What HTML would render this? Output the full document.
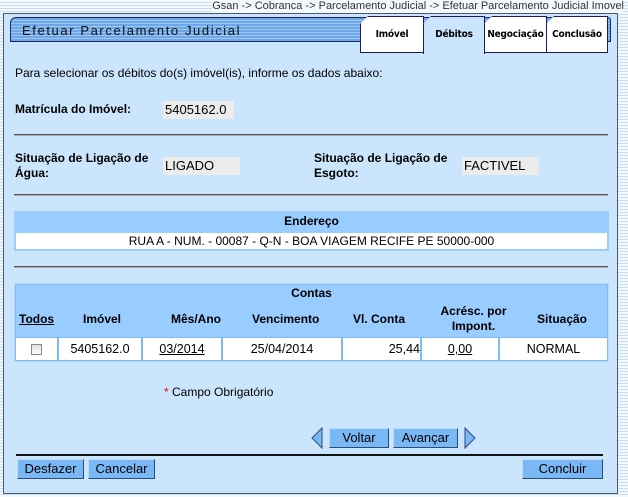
<!DOCTYPE html>
<html><head><meta charset="utf-8"><style>
*{margin:0;padding:0;box-sizing:border-box}
body{width:628px;height:497px;overflow:hidden;position:relative;font-family:"Liberation Sans",Arial,sans-serif;font-size:12px;color:#000;
background:repeating-linear-gradient(#f4f9ff 0,#f4f9ff 2px,#c6def6 2px,#c6def6 3px);}
.a{position:absolute}
.panel{left:3px;top:13px;width:615px;height:481px;background:#cbe5fc;border:1px solid #4a5a70}
.crumb{right:4px;top:0;font-size:11px;color:#333;background:#f4f9ff}
.title{left:10px;top:17px;width:601px;height:25px;border:1px solid #1a2a5a;border-radius:6px 3px 0 0;
background:repeating-linear-gradient(#6fa7e6 0,#6fa7e6 2px,#9cc7f2 2px,#9cc7f2 3px);}
.title span{position:absolute;left:11px;top:5px;font-size:13px;letter-spacing:1.6px;color:#111}
.tab{top:16px;height:37px;background:#fff;border:1px solid #1a1a5a;font-weight:bold;font-size:10px;text-align:center;line-height:36px;font-family:"DejaVu Sans Condensed","Liberation Sans Narrow",sans-serif;clip-path:polygon(8px 0,100% 0,100% 100%,0 100%,0 8px);letter-spacing:-0.2px}
.b{font-weight:bold}
.box{background:#ececec;height:18px;line-height:18px;padding-left:2px;font-size:13px}
.hr{left:14px;width:594px;height:2px;background:#555;border-bottom:1px solid #aaa}
.btn{height:20px;background:#7ab8f5;border:1px solid #2a4a7a;border-top-color:#c0dcff;border-left-color:#c0dcff;text-align:center;line-height:18px;font-size:13px}
</style></head><body>
<div class="a crumb">Gsan -&gt; Cobranca -&gt; Parcelamento Judicial -&gt; Efetuar Parcelamento Judicial Imovel</div>
<div class="a panel"></div>
<div class="a title"><span>Efetuar Parcelamento Judicial</span></div>
<div class="a tab" style="left:360px;width:64px">Imóvel</div>
<div class="a tab" style="left:423px;width:62px;background:#cbe5fc;border-bottom:none;height:38px">Débitos</div>
<div class="a tab" style="left:484px;width:63px">Negociação</div>
<div class="a tab" style="left:546px;width:62px">Conclusão</div>

<div class="a" style="left:15px;top:66px">Para selecionar os débitos do(s) imóvel(is), informe os dados abaixo:</div>
<div class="a b" style="left:15px;top:102px">Matrícula do Imóvel:</div>
<div class="a box" style="left:163px;top:101px;width:71px">5405162.0</div>
<div class="a hr" style="top:134px"></div>
<div class="a b" style="left:15px;top:151px;line-height:15px">Situação de Ligação de<br>Água:</div>
<div class="a box" style="left:163px;top:157px;width:77px">LIGADO</div>
<div class="a b" style="left:314px;top:151px;line-height:15px">Situação de Ligação de<br>Esgoto:</div>
<div class="a box" style="left:462px;top:157px;width:77px">FACTIVEL</div>
<div class="a hr" style="top:194px"></div>

<div class="a" style="left:14px;top:211px;width:595px;height:40px;background:#99ccff">
<div class="a b" style="left:0;top:3px;width:100%;text-align:center">Endereço</div>
<div class="a" style="left:2px;top:22px;width:591px;height:16px;background:#fff;text-align:center;line-height:16px">RUA A - NUM. - 00087 - Q-N - BOA VIAGEM RECIFE PE 50000-000</div>
</div>
<div class="a hr" style="top:266px"></div>

<div class="a" style="left:14px;top:283px;width:595px;height:79px;background:#7fbcf5;border:1px solid #b7d8f7"></div>
<div class="a b" style="left:16px;top:285px;width:591px;height:17px;background:#99ccff;text-align:center;line-height:17px">Contas</div>
<div class="a b" style="left:16px;top:302px;width:591px;height:35px;background:#99ccff;line-height:15px">
<span class="a" style="left:3px;top:10px;text-decoration:underline">Todos</span>
<span class="a" style="left:67px;top:10px">Imóvel</span>
<span class="a" style="left:155px;top:10px">Mês/Ano</span>
<span class="a" style="left:236px;top:10px">Vencimento</span>
<span class="a" style="left:337px;top:10px">Vl. Conta</span>
<span class="a" style="left:420px;top:2px;text-align:center;width:75px">Acrésc. por<br>Impont.</span>
<span class="a" style="left:521px;top:10px">Situação</span>
</div>
<div class="a" style="left:16px;top:338px;width:591px;height:22px;line-height:22px;font-size:12.5px">
<div class="a" style="left:0;width:41px;height:22px;background:#fff"><div style="position:absolute;left:15px;top:6px;width:11px;height:11px;border:1px solid #888;background:linear-gradient(#ddd,#fff)"></div></div>
<div class="a" style="left:43px;width:82px;height:22px;background:#fff;text-align:center">5405162.0</div>
<div class="a" style="left:127px;width:78px;height:22px;background:#fff;text-align:center"><u>03/2014</u></div>
<div class="a" style="left:207px;width:118px;height:22px;background:#fff;text-align:center">25/04/2014</div>
<div class="a" style="left:327px;width:77px;height:22px;background:#fff;text-align:right">25,44</div>
<div class="a" style="left:406px;width:76px;height:22px;background:#fff;text-align:center"><u>0,00</u></div>
<div class="a" style="left:484px;width:107px;height:22px;background:#fff;text-align:center">NORMAL</div>
</div>

<div class="a" style="left:164px;top:385px"><span style="color:#e00">*</span> Campo Obrigatório</div>

<svg class="a" style="left:310px;top:427px" width="14" height="22"><polygon points="12,1 2,11 12,21" fill="#7ab8f5" stroke="#2a4a7a"/></svg>
<div class="a btn" style="left:329px;top:428px;width:60px">Voltar</div>
<div class="a btn" style="left:393px;top:428px;width:65px">Avançar</div>
<svg class="a" style="left:463px;top:427px" width="14" height="22"><polygon points="2,1 12,11 2,21" fill="#7ab8f5" stroke="#2a4a7a"/></svg>
<div class="a" style="left:16px;top:454px;width:587px;height:2px;background:#111"></div>
<div class="a btn" style="left:17px;top:459px;width:67px">Desfazer</div>
<div class="a btn" style="left:88px;top:459px;width:67px">Cancelar</div>
<div class="a btn" style="left:522px;top:459px;width:81px">Concluir</div>
</body></html>
